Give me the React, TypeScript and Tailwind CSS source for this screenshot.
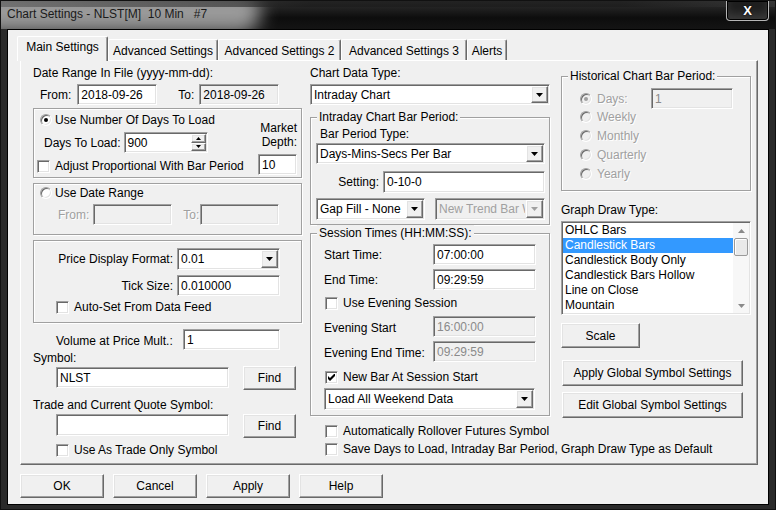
import React from "react";

const sunken =
  "border border-t-[#a0a0a0] border-l-[#a0a0a0] border-r-white border-b-white shadow-[inset_1px_1px_0_#696969,inset_-1px_-1px_0_#e3e3e3]";
const raised =
  "border border-t-white border-l-white border-r-[#696969] border-b-[#696969] shadow-[inset_-1px_-1px_0_#a0a0a0,inset_1px_1px_0_#e3e3e3] bg-[#f0f0f0]";
const etched = "border border-[#a0a0a0] shadow-[inset_1px_1px_0_#ffffff,1px_1px_0_#ffffff]";
const disText = "text-[#a0a0a0] [text-shadow:1px_1px_0_#ffffff]";

function Edit({ cls, value = "", bg = "bg-white", dim = false }: { cls: string; value?: string; bg?: string; dim?: boolean }) {
  return (
    <div className={`${sunken} ${cls} ${bg} ${dim ? "text-[#8a8a8a]" : "text-black"} shrink-0 flex items-center pl-[3px] overflow-hidden whitespace-nowrap`}>
      {value}
    </div>
  );
}

function Tri({ up = false, color = "#000", w = 7, h = 4 }: { up?: boolean; color?: string; w?: number; h?: number }) {
  return (
    <svg width={w} height={h} viewBox={`0 0 ${w} ${h}`}>
      <path d={up ? `M${w / 2} 0L${w} ${h}H0Z` : `M0 0H${w}L${w / 2} ${h}Z`} fill={color} />
    </svg>
  );
}

function Select({ cls, value, disabled = false }: { cls: string; value: string; disabled?: boolean }) {
  return (
    <div className={`${sunken} ${cls} ${disabled ? "bg-[#f0f0f0] text-[#a0a0a0]" : "bg-white text-black"} shrink-0 flex`}>
      <span className="flex-1 flex items-center pl-[3px] overflow-hidden whitespace-nowrap">{value}</span>
      <div className={`${raised} w-[17px] m-[1px] flex items-center justify-center shrink-0`}>
        <Tri color={disabled ? "#a0a0a0" : "#000"} />
      </div>
    </div>
  );
}

function Button({ cls, label }: { cls: string; label: string }) {
  return <div className={`${raised} ${cls} shrink-0 flex items-center justify-center whitespace-nowrap`}>{label}</div>;
}

function Check({ checked = false }: { checked?: boolean }) {
  return (
    <div className={`${sunken} w-[13px] h-[13px] bg-white shrink-0 flex items-center justify-center`}>
      {checked && (
        <svg width="7" height="7" viewBox="0 0 7 7">
          <path d="M0 2L2 4L7 -1V2L2 7L0 5Z" fill="#000" />
        </svg>
      )}
    </div>
  );
}

function Radio({ checked = false, disabled = false }: { checked?: boolean; disabled?: boolean }) {
  return (
    <div
      className={`w-[12px] h-[12px] rounded-full border border-t-[#a0a0a0] border-l-[#a0a0a0] border-r-white border-b-white shadow-[inset_1px_1px_0_#696969,inset_-1px_-1px_0_#e3e3e3] ${disabled ? "bg-[#f0f0f0]" : "bg-white"} shrink-0 flex items-center justify-center`}
    >
      {checked && <div className={`w-[4px] h-[4px] rounded-full ${disabled ? "bg-[#a0a0a0]" : "bg-black"}`} />}
    </div>
  );
}

function Tab({ label, cls, selected = false }: { label: string; cls: string; selected?: boolean }) {
  return (
    <div
      className={`${cls} ${selected ? "h-[25px] -mb-[1px] relative z-10 pb-[4px]" : "h-[21px] pt-[1px]"} bg-[#f0f0f0] border-t border-l border-r border-t-white border-l-white border-r-[#696969] rounded-t-[2px] shadow-[inset_-1px_0_0_#a0a0a0] flex items-center justify-center whitespace-nowrap shrink-0`}
    >
      {label}
    </div>
  );
}

function Group({ cls, legend, children }: { cls: string; legend: string; children: React.ReactNode }) {
  return (
    <div className={`${etched} ${cls} relative flex flex-col`}>
      <span className="absolute -top-[9px] left-[6px] px-[2px] bg-[#f0f0f0] leading-[16px] whitespace-nowrap">{legend}</span>
      {children}
    </div>
  );
}

function LeftColumn() {
  return (
    <div className="w-[269px] flex flex-col shrink-0">
      <div className="h-[16px]">Date Range In File (yyyy-mm-dd):</div>
      <div className="mt-[3px] h-[21px] flex items-center pl-[7px]">
        <span>From:</span>
        <Edit cls="ml-[6px] w-[80px] h-[21px]" value="2018-09-26" />
        <span className="ml-[21px]">To:</span>
        <Edit cls="ml-[5px] w-[80px] h-[21px]" value="2018-09-26" bg="bg-[#f0f0f0]" />
      </div>

      <div className={`${etched} mt-[3px] h-[70px] flex justify-between`}>
        <div className="flex flex-col pl-[6px] pt-[3px]">
          <div className="h-[16px] flex items-center">
            <Radio checked />
            <span className="ml-[3px]">Use Number Of Days To Load</span>
          </div>
          <div className="mt-[4px] h-[21px] flex items-center">
            <span className="ml-[4px]">Days To Load:</span>
            <div className={`${sunken} ml-[3px] w-[84px] h-[21px] bg-white flex`}>
              <span className="flex-1 flex items-center pl-[3px]">900</span>
              <div className="w-[15px] m-[1px] flex flex-col">
                <div className={`${raised} flex-1 flex items-center justify-center`}>
                  <Tri up w={5} h={3} />
                </div>
                <div className={`${raised} flex-1 flex items-center justify-center`}>
                  <Tri w={5} h={3} />
                </div>
              </div>
            </div>
          </div>
          <div className="mt-[5px] h-[16px] flex items-center -ml-[3px]">
            <Check />
            <span className="ml-[5px] whitespace-nowrap">Adjust Proportional With Bar Period</span>
          </div>
        </div>
        <div className="flex flex-col items-end pr-[4px] pt-[12px]">
          <div className="text-right leading-[14px]">
            Market
            <br />
            Depth:
          </div>
          <Edit cls="mt-[5px] w-[39px] h-[21px]" value="10" />
        </div>
      </div>

      <div className={`${etched} mt-[5px] h-[52px] flex flex-col`}>
        <div className="pl-[6px] pt-[1px] h-[17px] flex items-center">
          <Radio />
          <span className="ml-[3px]">Use Date Range</span>
        </div>
        <div className="mt-[3px] h-[21px] flex items-center pl-[24px]">
          <span className={disText}>From:</span>
          <Edit cls="ml-[4px] w-[79px] h-[21px]" bg="bg-[#f0f0f0]" />
          <span className={`ml-[11px] ${disText}`}>To:</span>
          <Edit cls="ml-[1px] w-[79px] h-[21px]" bg="bg-[#f0f0f0]" />
        </div>
      </div>

      <div className={`${etched} mt-[5px] h-[83px] flex flex-col pt-[7px]`}>
        <div className="h-[22px] flex items-center">
          <span className="w-[139px] text-right">Price Display Format:</span>
          <Select cls="ml-[4px] w-[103px] h-[22px]" value="0.01" />
        </div>
        <div className="mt-[5px] h-[21px] flex items-center">
          <span className="w-[139px] text-right">Tick Size:</span>
          <Edit cls="ml-[4px] w-[103px] h-[21px]" value="0.010000" />
        </div>
        <div className="mt-[3px] h-[16px] flex items-center pl-[22px]">
          <Check />
          <span className="ml-[5px]">Auto-Set From Data Feed</span>
        </div>
      </div>

      <div className="mt-[6px] h-[21px] flex items-center">
        <span className="w-[150px] pl-[23px] pt-[3px]">Volume at Price Mult.:</span>
        <Edit cls="w-[97px] h-[21px]" value="1" />
      </div>
      <div className="h-[16px]">Symbol:</div>
      <div className="h-[24px] flex items-start">
        <Edit cls="ml-[23px] mt-[1px] w-[173px] h-[21px]" value="NLST" />
        <Button cls="ml-[14px] w-[53px] h-[24px]" label="Find" />
      </div>
      <div className="mt-[7px] h-[16px]">Trade and Current Quote Symbol:</div>
      <div className="mt-[1px] h-[24px] flex items-start">
        <Edit cls="ml-[23px] w-[173px] h-[22px]" />
        <Button cls="ml-[14px] w-[53px] h-[24px]" label="Find" />
      </div>
      <div className="mt-[4px] h-[16px] flex items-center pl-[23px]">
        <Check />
        <span className="ml-[5px]">Use As Trade Only Symbol</span>
      </div>
    </div>
  );
}

function MiddleColumn() {
  return (
    <div className="ml-[8px] w-[240px] flex flex-col shrink-0">
      <div className="h-[16px]">Chart Data Type:</div>
      <Select cls="mt-[3px] w-[240px] h-[21px]" value="Intraday Chart" />

      <Group cls="mt-[12px] h-[108px]" legend="Intraday Chart Bar Period:">
        <div className="pt-[8px] pl-[9px] h-[24px]">Bar Period Type:</div>
        <Select cls="mt-[1px] ml-[5px] w-[229px] h-[21px]" value="Days-Mins-Secs Per Bar" />
        <div className="mt-[7px] h-[22px] flex items-center">
          <span className="w-[72px] text-right pr-[4px]">Setting:</span>
          <Edit cls="w-[162px] h-[22px]" value="0-10-0" />
        </div>
        <div className="mt-[5px] h-[22px] flex items-center pl-[5px]">
          <Select cls="w-[109px] h-[22px]" value="Gap Fill - None" />
          <Select cls="ml-[10px] w-[110px] h-[22px]" value="New Trend Bar When" disabled />
        </div>
      </Group>

      <Group cls="mt-[8px] h-[183px]" legend="Session Times (HH:MM:SS):">
        <div className="mt-[10px] h-[21px] flex items-center justify-between pl-[13px] pr-[13px]">
          <span>Start Time:</span>
          <Edit cls="w-[103px] h-[21px]" value="07:00:00" />
        </div>
        <div className="mt-[4px] h-[21px] flex items-center justify-between pl-[13px] pr-[13px]">
          <span>End Time:</span>
          <Edit cls="w-[103px] h-[21px]" value="09:29:59" />
        </div>
        <div className="mt-[5px] h-[16px] flex items-center pl-[14px]">
          <Check />
          <span className="ml-[5px]">Use Evening Session</span>
        </div>
        <div className="mt-[5px] h-[21px] flex items-center justify-between pl-[13px] pr-[13px]">
          <span className="pt-[2px]">Evening Start</span>
          <Edit cls="w-[103px] h-[21px]" value="16:00:00" bg="bg-[#f0f0f0]" dim />
        </div>
        <div className="mt-[4px] h-[21px] flex items-center justify-between pl-[13px] pr-[13px]">
          <span className="pt-[2px]">Evening End Time:</span>
          <Edit cls="w-[103px] h-[21px]" value="09:29:59" bg="bg-[#f0f0f0]" dim />
        </div>
        <div className="mt-[7px] h-[16px] flex items-center pl-[14px]">
          <Check checked />
          <span className="ml-[5px]">New Bar At Session Start</span>
        </div>
        <Select cls="mt-[3px] ml-[13px] w-[211px] h-[22px]" value="Load All Weekend Data" />
      </Group>

      <div className="mt-[7px] h-[16px] flex items-center pl-[15px] whitespace-nowrap">
        <Check />
        <span className="ml-[5px]">Automatically Rollover Futures Symbol</span>
      </div>
      <div className="mt-[2px] h-[16px] flex items-center pl-[15px] whitespace-nowrap">
        <Check />
        <span className="ml-[5px]">Save Days to Load, Intraday Bar Period, Graph Draw Type as Default</span>
      </div>
    </div>
  );
}

const drawTypes = ["OHLC Bars", "Candlestick Bars", "Candlestick Body Only", "Candlestick Bars Hollow", "Line on Close", "Mountain"];

function RightColumn() {
  return (
    <div className="ml-[11px] w-[190px] flex flex-col shrink-0">
      <Group cls="mt-[11px] h-[115px]" legend="Historical Chart Bar Period:">
        <div className="mt-[11px] h-[21px] flex items-center pl-[18px]">
          <Radio checked disabled />
          <span className={`ml-[5px] w-[54px] ${disText}`}>Days:</span>
          <Edit cls="w-[82px] h-[21px]" value="1" bg="bg-[#f0f0f0]" dim />
        </div>
        {["Weekly", "Monthly", "Quarterly", "Yearly"].map((t, i) => (
          <div key={t} className={`${i === 0 ? "-mt-[2px]" : ""} h-[19px] flex items-center pl-[18px]`}>
            <Radio disabled />
            <span className={`ml-[5px] ${disText}`}>{t}</span>
          </div>
        ))}
      </Group>

      <div className="mt-[11px] h-[16px]">Graph Draw Type:</div>
      <div className={`${sunken} mt-[3px] h-[94px] bg-white flex overflow-hidden`}>
        <div className="flex-1 flex flex-col pt-[1px] pl-[1px] overflow-hidden">
          {drawTypes.map((t, i) => (
            <div
              key={t}
              className={`h-[15px] leading-[15px] pl-[2px] shrink-0 whitespace-nowrap ${i === 1 ? "bg-[#3399ff] text-white" : ""}`}
            >
              {t}
            </div>
          ))}
        </div>
        <div className="w-[16px] my-[1px] mr-[1px] flex flex-col bg-[#f7f7f7]">
          <div className="h-[15px] flex items-center justify-center">
            <Tri up color="#8a8a8a" w={7} h={4} />
          </div>
          <div className="h-[18px] mx-[1px] border border-[#9a9a9a] rounded-[2px] bg-[#e9e9e9] shadow-[inset_1px_1px_0_#ffffff]" />
          <div className="flex-1" />
          <div className="h-[15px] flex items-center justify-center">
            <Tri color="#8a8a8a" w={7} h={4} />
          </div>
        </div>
      </div>
      <Button cls="mt-[8px] w-[79px] h-[25px]" label="Scale" />
      <Button cls="mt-[12px] ml-[1px] w-[181px] h-[26px]" label="Apply Global Symbol Settings" />
      <Button cls="mt-[6px] ml-[1px] w-[181px] h-[26px]" label="Edit Global Symbol Settings" />
    </div>
  );
}

function TitleBar() {
  return (
    <div className="h-[28px] shrink-0 relative overflow-hidden bg-[linear-gradient(180deg,#303030,#0d0d0d_60%,#141414)]">
      <div className="absolute -left-[30px] -top-[10px] w-[290px] h-[42px] rounded-full bg-[#a8a8a8] blur-[9px] opacity-90" />
      <div className="absolute left-0 top-0 w-[776px] h-[6px] bg-[linear-gradient(90deg,#5a5a5a,#1a1a1a_40%,#1a1a1a_80%,#3a3a3a)] opacity-60" />
      <div className="relative pl-[6px] pt-[5px] text-[12px] leading-[16px] text-[#1a1a1a] whitespace-pre">
        {"Chart Settings - NLST[M]  10 Min   #7"}
      </div>
      <div className="absolute right-[6px] top-0 w-[43px] h-[20px] rounded-b-[4px] border border-t-0 border-[#b5b5b5] bg-[#1e1e1e] shadow-[inset_0_0_0_1px_#000,inset_0_-6px_8px_#3a3a3a] flex items-center justify-center">
        <span className="text-white font-bold text-[13px] leading-[14px] [text-shadow:0_0_2px_#000]">X</span>
      </div>
    </div>
  );
}

export default function App() {
  return (
    <div className="w-[776px] h-[510px] bg-[#2a2a2a] flex flex-col font-['Liberation_Sans',Arial,sans-serif] text-[12px] leading-[16px] text-black overflow-hidden border border-[#111]">
      <TitleBar />
      <div className="mx-[6px] mb-[4px] flex-1 border border-black bg-[#f0f0f0] flex flex-col pl-[12px] pt-[6px]">
        <div className="h-[24px] flex items-end">
          <Tab cls="-ml-[3px] w-[91px]" label="Main Settings" selected />
          <Tab cls="w-[110px]" label="Advanced Settings" />
          <Tab cls="w-[123px]" label="Advanced Settings 2" />
          <Tab cls="w-[126px]" label="Advanced Settings 3" />
          <Tab cls="w-[40px]" label="Alerts" />
        </div>
        <div className="w-[738px] h-[405px] border border-t-white border-l-white border-r-[#696969] border-b-[#696969] shadow-[inset_-1px_-1px_0_#a0a0a0] flex pl-[12px] pt-[4px]">
          <LeftColumn />
          <MiddleColumn />
          <RightColumn />
        </div>
        <div className="mt-[9px] flex gap-[9px]">
          <Button cls="w-[84px] h-[24px]" label="OK" />
          <Button cls="w-[84px] h-[24px]" label="Cancel" />
          <Button cls="w-[84px] h-[24px]" label="Apply" />
          <Button cls="w-[84px] h-[24px]" label="Help" />
        </div>
      </div>
    </div>
  );
}
